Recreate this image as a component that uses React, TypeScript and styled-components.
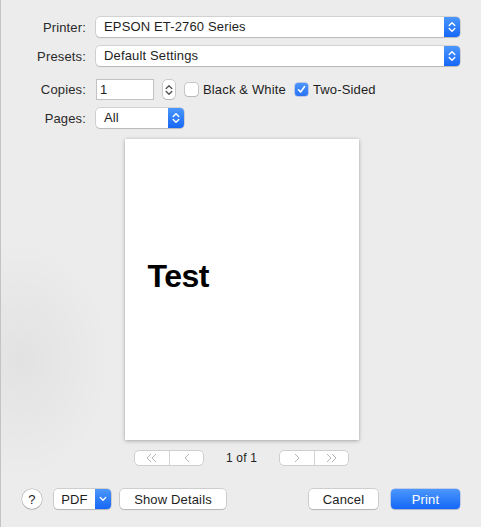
import React from "react";
import styled, { createGlobalStyle } from "styled-components";

const Global = createGlobalStyle`
  html, body { margin: 0; padding: 0; }
  body {
    font-family: "Liberation Sans", Arial, sans-serif;
    -webkit-font-smoothing: antialiased;
  }
`;

const Window = styled.div`
  width: 481px;
  height: 527px;
  box-sizing: border-box;
  border-left: 1px solid #c4c4c4;
  background:
    radial-gradient(ellipse 90px 120px at 20px 360px, rgba(0,0,0,0.045), rgba(0,0,0,0) 100%),
    #ececec;
  display: flex;
  flex-direction: column;
  font-size: 13px;
  letter-spacing: 0.15px;
  color: #262626;
  overflow: hidden;
`;

const Form = styled.div`
  display: grid;
  grid-template-columns: 85px 1fr;
  column-gap: 10px;
  align-items: center;
  padding: 17px 21px 0 0;
`;

const Label = styled.div<{ $top: number }>`
  text-align: right;
  margin-top: ${(p) => p.$top}px;
  color: #2a2a2a;
`;

const Cell = styled.div<{ $top: number }>`
  display: flex;
  align-items: center;
  margin-top: ${(p) => p.$top}px;
`;

const Select = styled.div<{ $width?: number }>`
  display: flex;
  align-items: stretch;
  height: 20px;
  width: ${(p) => (p.$width ? `${p.$width}px` : "100%")};
  box-sizing: border-box;
  background: #fff;
  border-radius: 4px;
  box-shadow: 0 0 0 0.5px rgba(0,0,0,0.22), 0 1px 1px rgba(0,0,0,0.12);
  overflow: hidden;
`;

const SelectText = styled.div`
  flex: 1;
  padding-left: 8px;
  line-height: 20px;
  color: #1e1e1e;
  white-space: nowrap;
`;

const BlueCap = styled.div`
  width: 16px;
  display: flex;
  align-items: center;
  justify-content: center;
  background: linear-gradient(#4b97fc, #1667f7);
`;

const Input = styled.div`
  width: 58px;
  height: 21px;
  box-sizing: border-box;
  background: #fff;
  border: 1px solid #c2c2c2;
  padding-left: 3px;
  line-height: 19px;
  color: #1e1e1e;
`;

const Stepper = styled.div`
  width: 12px;
  height: 19px;
  margin-left: 9px;
  box-sizing: border-box;
  background: #fff;
  border-radius: 4px;
  box-shadow: 0 0 0 0.5px rgba(0,0,0,0.28), 0 1px 1px rgba(0,0,0,0.1);
  display: flex;
  align-items: center;
  justify-content: center;
`;

const Check = styled.div<{ $on?: boolean }>`
  width: 13px;
  height: 13px;
  box-sizing: border-box;
  border-radius: 3px;
  background: ${(p) => (p.$on ? "linear-gradient(#4a95fb, #2a74f5)" : "#fff")};
  box-shadow: ${(p) =>
    p.$on ? "0 0 0 0.5px rgba(0,60,200,0.4)" : "0 0 0 0.5px rgba(0,0,0,0.3), 0 1px 1px rgba(0,0,0,0.08)"};
  display: flex;
  align-items: center;
  justify-content: center;
  margin-left: ${(p) => (p.$on ? 9 : 10)}px;
`;

const CheckLabel = styled.span`
  margin-left: 5px;
  color: #1e1e1e;
`;

const Preview = styled.div`
  display: flex;
  flex-direction: column;
  align-items: center;
  margin-top: 11px;
  padding-left: 1px;
`;

const Page = styled.div`
  width: 234px;
  height: 301px;
  background: #fff;
  box-shadow: 0 1px 4px rgba(0,0,0,0.28), 0 0 1px rgba(0,0,0,0.15);
  box-sizing: border-box;
  padding: 121px 0 0 23px;
`;

const PageText = styled.div`
  font-family: "Liberation Sans", Arial, sans-serif;
  font-weight: 700;
  font-size: 32px;
  letter-spacing: -0.5px;
  color: #000;
  line-height: 32px;
`;

const Nav = styled.div`
  display: flex;
  align-items: center;
  margin-top: 11px;
`;

const NavGroup = styled.div`
  display: flex;
  height: 14px;
  background: #fff;
  border-radius: 4px;
  box-shadow: 0 0 0 0.5px rgba(0,0,0,0.25);
`;

const NavBtn = styled.div<{ $divider?: boolean }>`
  width: 34px;
  display: flex;
  align-items: center;
  justify-content: center;
  border-left: ${(p) => (p.$divider ? "1px solid #d4d4d4" : "none")};
  box-sizing: border-box;
`;

const PageCount = styled.div`
  width: 77px;
  text-align: center;
  font-size: 12px;
  color: #222;
`;

const Footer = styled.div`
  display: flex;
  align-items: center;
  margin-top: 24px;
  padding: 0 21px 0 21px;
`;

const Help = styled.div`
  width: 20px;
  height: 20px;
  border-radius: 50%;
  background: #fff;
  box-shadow: 0 0 0 0.5px rgba(0,0,0,0.25), 0 1px 1px rgba(0,0,0,0.12);
  display: flex;
  align-items: center;
  justify-content: center;
  font-size: 13px;
  color: #222;
`;

const Button = styled.div<{ $w: number; $primary?: boolean; $ml: number }>`
  width: ${(p) => p.$w}px;
  height: 20px;
  margin-left: ${(p) => p.$ml}px;
  border-radius: 4px;
  box-sizing: border-box;
  display: flex;
  align-items: center;
  justify-content: center;
  background: ${(p) => (p.$primary ? "linear-gradient(#4b97fc, #1667f7)" : "#fff")};
  color: ${(p) => (p.$primary ? "#fff" : "#1e1e1e")};
  box-shadow: ${(p) =>
    p.$primary ? "0 0 0 0.5px rgba(0,60,200,0.35), 0 1px 1px rgba(0,0,0,0.12)" : "0 0 0 0.5px rgba(0,0,0,0.25), 0 1px 1px rgba(0,0,0,0.12)"};
`;

const SplitButton = styled.div`
  display: flex;
  width: 57px;
  height: 20px;
  margin-left: 12px;
  border-radius: 4px;
  overflow: hidden;
  background: #fff;
  box-shadow: 0 0 0 0.5px rgba(0,0,0,0.25), 0 1px 1px rgba(0,0,0,0.12);
`;

const SplitText = styled.div`
  flex: 1;
  display: flex;
  align-items: center;
  justify-content: center;
  color: #1e1e1e;
`;

const Spacer = styled.div`
  flex: 1;
`;

const UpDown = ({ color = "#fff" }: { color?: string }) => (
  <svg width="8" height="12" viewBox="0 0 8 12">
    <polyline points="1.2,4.6 4,1.8 6.8,4.6" fill="none" stroke={color} strokeWidth="1.4" strokeLinecap="round" strokeLinejoin="round" />
    <polyline points="1.2,7.4 4,10.2 6.8,7.4" fill="none" stroke={color} strokeWidth="1.4" strokeLinecap="round" strokeLinejoin="round" />
  </svg>
);

const Down = () => (
  <svg width="8" height="6" viewBox="0 0 8 6">
    <polyline points="1.3,1.5 4,4.2 6.7,1.5" fill="none" stroke="#fff" strokeWidth="1.4" strokeLinecap="round" strokeLinejoin="round" />
  </svg>
);

const Tick = () => (
  <svg width="9" height="9" viewBox="0 0 9 9">
    <polyline points="1.5,4.8 3.6,7 7.6,1.5" fill="none" stroke="#fff" strokeWidth="1.6" strokeLinecap="round" strokeLinejoin="round" />
  </svg>
);

const Chev = ({ dir, double }: { dir: "l" | "r"; double?: boolean }) => {
  const one = (x: number) =>
    dir === "l" ? `${x + 4},1 ${x},5 ${x + 4},9` : `${x},1 ${x + 4},5 ${x},9`;
  return (
    <svg width={double ? 12 : 6} height="10" viewBox={double ? "0 0 12 10" : "0 0 6 10"}>
      <polyline points={one(1)} fill="none" stroke="#b4b4b4" strokeWidth="1" />
      {double && <polyline points={one(6)} fill="none" stroke="#b4b4b4" strokeWidth="1" />}
    </svg>
  );
};

export default function App() {
  return (
    <Window>
      <Global />
      <Form>
        <Label $top={0}>Printer:</Label>
        <Cell $top={0}>
          <Select>
            <SelectText>EPSON ET-2760 Series</SelectText>
            <BlueCap><UpDown /></BlueCap>
          </Select>
        </Cell>
        <Label $top={9}>Presets:</Label>
        <Cell $top={9}>
          <Select>
            <SelectText>Default Settings</SelectText>
            <BlueCap><UpDown /></BlueCap>
          </Select>
        </Cell>
        <Label $top={13}>Copies:</Label>
        <Cell $top={13}>
          <Input>1</Input>
          <Stepper><UpDown color="#555" /></Stepper>
          <Check />
          <CheckLabel>Black &amp; White</CheckLabel>
          <Check $on><Tick /></Check>
          <CheckLabel>Two-Sided</CheckLabel>
        </Cell>
        <Label $top={8}>Pages:</Label>
        <Cell $top={8}>
          <Select $width={88}>
            <SelectText>All</SelectText>
            <BlueCap><UpDown /></BlueCap>
          </Select>
        </Cell>
      </Form>
      <Preview>
        <Page>
          <PageText>Test</PageText>
        </Page>
        <Nav>
          <NavGroup>
            <NavBtn><Chev dir="l" double /></NavBtn>
            <NavBtn $divider><Chev dir="l" /></NavBtn>
          </NavGroup>
          <PageCount>1 of 1</PageCount>
          <NavGroup>
            <NavBtn><Chev dir="r" /></NavBtn>
            <NavBtn $divider><Chev dir="r" double /></NavBtn>
          </NavGroup>
        </Nav>
      </Preview>
      <Footer>
        <Help>?</Help>
        <SplitButton>
          <SplitText>PDF</SplitText>
          <BlueCap><Down /></BlueCap>
        </SplitButton>
        <Button $w={106} $ml={9}>Show Details</Button>
        <Spacer />
        <Button $w={69} $ml={0}>Cancel</Button>
        <Button $w={69} $ml={13} $primary>Print</Button>
      </Footer>
    </Window>
  );
}
